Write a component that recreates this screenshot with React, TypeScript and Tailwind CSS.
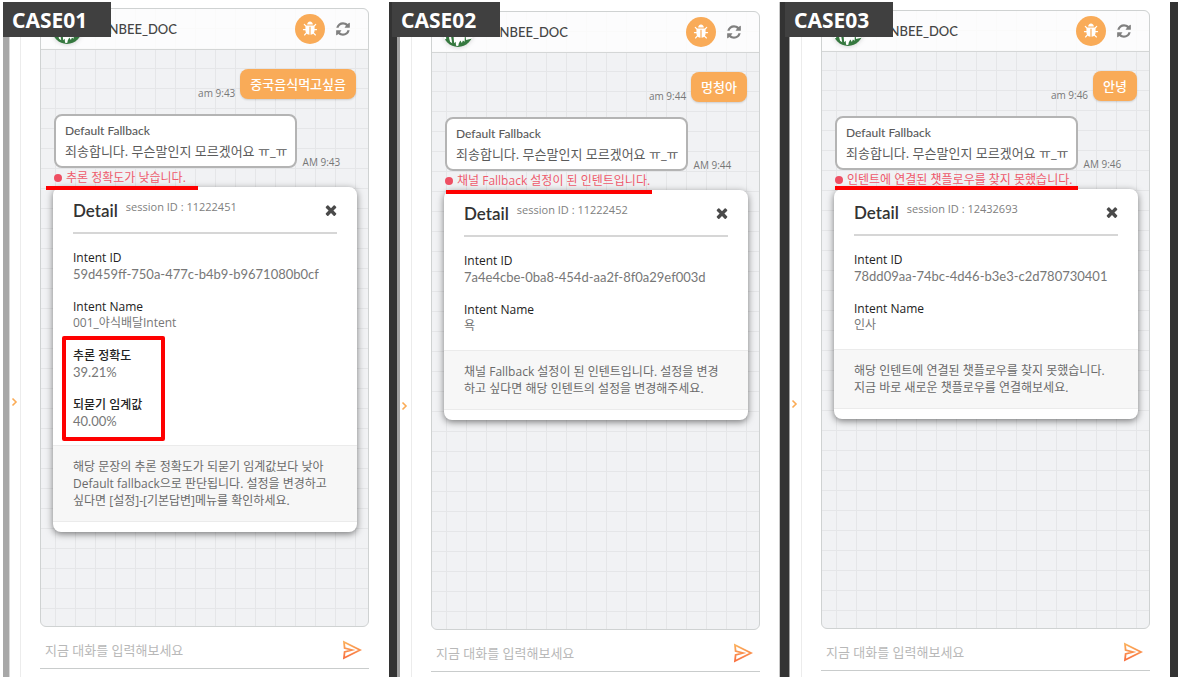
import React from "react";

const BUG =
  "M1696 960q0 26-19 45t-45 19h-224q0 171-67 290l208 209q19 19 19 45t-19 45q-18 19-45 19t-45-19l-198-197q-5 5-15 13t-42 28.5-65 36.5-82 29-97 13v-896h-128v896q-51 0-101.5-13.5t-87-33-66-39-43.5-32.5l-15-14-183 207q-20 21-48 21-24 0-43-16-19-18-20.5-44.5t15.5-46.5l202-227q-58-114-58-274h-224q-26 0-45-19t-19-45 19-45 45-19h224v-294l-173-173q-19-19-19-45t19-45 45-19 45 19l173 173h844l173-173q19-19 45-19t45 19 19 45-19 45l-173 173v294h224q26 0 45 19t19 45zm-480-576h-640q0-133 93.5-226.5t226.5-93.5 226.5 93.5 93.5 226.5z";
const REFRESH =
  "M1639 1056q0 5-1 7-64 268-268 434.5t-478 166.5q-146 0-282.5-55t-243.5-157l-129 129q-19 19-45 19t-45-19-19-45v-448q0-26 19-45t45-19h448q26 0 45 19t19 45-19 45l-137 137q71 66 161 102t187 36q134 0 250-65t186-179q11-17 53-117 8-23 30-23h192q13 0 22.5 9.5t9.5 22.5zm25-800v448q0 26-19 45t-45 19h-448q-26 0-45-19t-19-45 19-45l138-138q-148-137-349-137-134 0-250 65t-186 179q-11 17-53 117-8 23-30 23h-199q-13 0-22.5-9.5t-9.5-22.5v-7q65-268 270-434.5t480-166.5q146 0 284 55.5t245 156.5l130-129q19-19 45-19t45 19 19 45z";
const TIMES =
  "M1490 1322q0 40-28 68l-136 136q-28 28-68 28t-68-28l-294-294-294 294q-28 28-68 28t-68-28l-136-136q-28-28-28-68t28-68l294-294-294-294q-28-28-28-68t28-68l136-136q28-28 68-28t68 28l294 294 294-294q28-28 68-28t68 28l136 136q28 28 28 68t-28 68l-294 294 294 294q28 28 28 68z";

function Glyph({ path, className }: { path: string; className: string }) {
  return (
    <svg viewBox="0 0 1792 1792" fill="currentColor" className={className} aria-hidden="true">
      <path d={path} />
    </svg>
  );
}

function Avatar() {
  return (
    <svg viewBox="0 0 28 28" className="size-[30px] shrink-0 drop-shadow-sm" aria-hidden="true">
      <circle cx="14" cy="14" r="14" fill="#35783f" />
      <path
        d="M5.500 19 L7.600 18.500 L8.600 24.500 L6.600 23 Z M9.500 14 L20.500 14 L20.200 23.200 L18.600 22 L17.600 24.200 L16.200 22 L14.800 24.500 L14.200 27 L12.200 26.800 L11.800 23 L10.400 24.500 Z"
        fill="#fff"
      />
      <path d="M0 14 L2.500 14 L3 20.500 L1.200 21 Z M21 17 L28 15.500 L27.400 20 L21.500 21.500 Z" fill="#fff" />
    </svg>
  );
}

function SendIcon({ id }: { id: string }) {
  return (
    <svg viewBox="0 0 20 20" fill="none" className="size-5" aria-hidden="true">
      <defs>
        <linearGradient id={id} x1="0" y1="0" x2="0" y2="1">
          <stop offset="0" stopColor="#fbb05c" />
          <stop offset="1" stopColor="#f9703f" />
        </linearGradient>
      </defs>
      <path
        d="M2 2 L18 10 L2 18 L2.600 12 L10 10 L2.600 8 Z"
        stroke={`url(#${id})`}
        strokeWidth="1.800"
      />
    </svg>
  );
}

type Field = { label: string; value: string };

type Case = {
  tag: string;
  tagClass: string;
  edge: React.ReactNode;
  railClass: string;
  bodyClass: string;
  underline: string;
  message: string;
  time: string;
  status: string;
  session: string;
  fields: Field[];
  marked?: Field[];
  note: string[];
};

const cases: Case[] = [
  {
    tag: "CASE01",
    tagClass: "left-[3px]",
    edge: (
      <>
        <div className="ml-[3px] w-[6px] bg-[#a8a8a8]" />
        <div className="w-px bg-[#d9d9d9]" />
      </>
    ),
    railClass: "w-[11px] pt-[6px]",
    bodyClass: "pt-[6px] pb-2 pl-[19px] pr-5",
    underline: "left-[5px] top-[177px] w-[152px]",
    message: "중국음식먹고싶음",
    time: "9:43",
    status: "추론 정확도가 낮습니다.",
    session: "11222451",
    fields: [
      { label: "Intent ID", value: "59d459ff-750a-477c-b4b9-b9671080b0cf" },
      { label: "Intent Name", value: "001_야식배달Intent" },
    ],
    marked: [
      { label: "추론 정확도", value: "39.21%" },
      { label: "되묻기 임계값", value: "40.00%" },
    ],
    note: [
      "해당 문장의 추론 정확도가 되묻기 임계값보다 낮아",
      "Default fallback으로 판단됩니다. 설정을 변경하고",
      "싶다면 [설정]-[기본답변]메뉴를 확인하세요.",
    ],
  },
  {
    tag: "CASE02",
    tagClass: "left-[3px]",
    edge: (
      <>
        <div className="w-2 bg-[#333333]" />
        <div className="w-[3px] bg-[#a0a0a0]" />
      </>
    ),
    railClass: "w-[12px] pt-[10px]",
    bodyClass: "border-r border-[#c8c8c8] pt-[9px] pb-[5px] pl-[19px] pr-[19px]",
    underline: "left-[14px] top-[178px] w-[206px]",
    message: "멍청아",
    time: "9:44",
    status: "채널 Fallback 설정이 된 인텐트입니다.",
    session: "11222452",
    fields: [
      { label: "Intent ID", value: "7a4e4cbe-0ba8-454d-aa2f-8f0a29ef003d" },
      { label: "Intent Name", value: "욕" },
    ],
    note: [
      "채널 Fallback 설정이 된 인텐트입니다. 설정을 변경",
      "하고 싶다면 해당 인텐트의 설정을 변경해주세요.",
    ],
  },
  {
    tag: "CASE03",
    tagClass: "left-[5px]",
    edge: (
      <>
        <div className="w-[9px] bg-[#333333]" />
        <div className="w-px bg-[#a0a0a0]" />
      </>
    ),
    railClass: "w-[12px] pt-[8px]",
    bodyClass: "pt-[8px] pb-[6px] pl-[19px] pr-5",
    underline: "left-[13px] top-[175px] w-[243px]",
    message: "안녕",
    time: "9:46",
    status: "인텐트에 연결된 챗플로우를 찾지 못했습니다.",
    session: "12432693",
    fields: [
      { label: "Intent ID", value: "78dd09aa-74bc-4d46-b3e3-c2d780730401" },
      { label: "Intent Name", value: "인사" },
    ],
    note: [
      "해당 인텐트에 연결된 챗플로우를 찾지 못했습니다.",
      "지금 바로 새로운 챗플로우를 연결해보세요.",
    ],
  },
];

const isNumeric = (value: string) => /^[\w.%-]+$/.test(value);

function FieldList({ fields }: { fields: Field[] }) {
  return (
    <dl className="flex flex-col gap-[17px] text-xs leading-4">
      {fields.map((f) => (
        <div key={f.label}>
          <dt className="font-medium text-[#222222]">{f.label}</dt>
          <dd
            className={
              isNumeric(f.value)
                ? "font-['Lato',sans-serif] text-[13px] leading-4 text-[#777777]"
                : "text-[#777777]"
            }
          >
            {f.value}
          </dd>
        </div>
      ))}
    </dl>
  );
}

function DetailCard({ item }: { item: Case }) {
  return (
    <div className="mr-[11px] ml-3 rounded-lg bg-white pb-[10px] shadow-[0_2px_7px_rgba(0,0,0,0.5)]">
      <div className="mx-5 flex h-[47px] items-center border-b-2 border-[#d6d6d6] pt-[3px]">
        <h2 className="font-['Lato',sans-serif] text-[17px] leading-6 font-semibold text-[#333333]">Detail</h2>
        <span className="mb-2 ml-2 text-[11px] leading-4 text-[#808080]">
          session ID : {item.session}
        </span>
        <button type="button" aria-label="Close" className="-mr-[2px] mb-[3px] ml-auto text-[#4a4a4a]">
          <Glyph path={TIMES} className="size-4" />
        </button>
      </div>
      <div className="flex flex-col gap-[17px] px-5 py-4">
        <FieldList fields={item.fields} />
        {item.marked && (
          <div className="relative">
            <FieldList fields={item.marked} />
            <div className="absolute -top-[12px] -bottom-[12px] -left-[11px] w-[103px] rounded-xs border-4 border-[#fe0000]" />
          </div>
        )}
      </div>
      <p className="border-y border-[#ebebeb] bg-[#f7f7f7] px-5 py-3 text-xs leading-[17px] whitespace-nowrap text-[#6a6a6a]">
        {item.note.map((line) => (
          <span key={line} className="block">
            {line}
          </span>
        ))}
      </p>
    </div>
  );
}

function CasePanel({ item }: { item: Case }) {
  return (
    <section className="relative flex">
      {item.edge}
      <div className={`${item.railClass} shrink-0 border-r border-[#ececec]`}>
        <button type="button" aria-label="Expand" className="mt-[389px] block">
          <svg viewBox="0 0 8 10" fill="none" className="h-[10px] w-2" aria-hidden="true">
            <path d="M2.500 1.500 L6 5 L2.500 8.500" stroke="#fbab55" strokeWidth="1.600" />
          </svg>
        </button>
      </div>
      <div className={`${item.bodyClass} flex min-w-0 flex-1 flex-col`}>
        <div className="relative flex-1 rounded-md border border-[#cfd2d2] bg-[#f1f2f4] bg-[linear-gradient(to_right,#e5e6e8_1px,transparent_1px),linear-gradient(to_bottom,#e5e6e8_1px,transparent_1px)] bg-size-[20px_20px] bg-position-[14px_19px]">
          <header className="flex h-[41px] items-center rounded-t-md border-b border-[#d4d6d6] bg-white/80 pr-[17px] pl-[11px]">
            <Avatar />
            <h1 className="ml-2 font-['Lato',sans-serif] text-[13px] leading-5 font-medium text-[#444444]">
              DANBEE_DOC
            </h1>
            <button
              type="button"
              aria-label="Debug"
              className="ml-auto flex size-[30px] items-center justify-center rounded-full bg-[#f9ab58] text-white"
            >
              <Glyph path={BUG} className="size-4" />
            </button>
            <button type="button" aria-label="Refresh" className="ml-[10px] text-[#808080]">
              <Glyph path={REFRESH} className="size-4" />
            </button>
          </header>
          <div className="flex items-end justify-end gap-[5px] pt-[19px] pr-3">
            <span className="text-[10px] leading-3 text-[#777777]">am {item.time}</span>
            <p className="rounded-lg bg-[#f9ab58] px-[10px] py-[6px] text-[13px] leading-[18px] font-medium text-white shadow-[0_1px_2px_rgba(0,0,0,0.15)]">
              {item.message}
            </p>
          </div>
          <div className="flex items-end gap-[6px] pt-[15px] pl-[13px]">
            <div className="rounded-lg border-2 border-[#b4b4b4] bg-white py-[5px] pr-[7px] pl-[9px] text-[#5a5a5a]">
              <p className="font-['Lato',sans-serif] text-xs leading-5 font-medium">Default Fallback</p>
              <p className="text-[13px] leading-5 whitespace-nowrap">죄송합니다. 무슨말인지 모르겠어요 ㅠ_ㅠ</p>
            </div>
            <span className="text-[10px] leading-3 text-[#777777]">AM {item.time}</span>
          </div>
          <p className="flex items-center gap-1 pl-[13px] text-xs leading-[19px] whitespace-nowrap text-[#ee5a6c]">
            <span className="size-2 rounded-full bg-[#ee4f63]" />
            {item.status}
          </p>
          <DetailCard item={item} />
          <div className={`${item.underline} absolute h-1 bg-[#fe0000]`} />
        </div>
        <form
          className="flex h-[42px] items-center border-b border-[#c9cccc] pt-1 pr-[7px] pl-[5px]"
          onSubmit={(e) => e.preventDefault()}
        >
          <input
            type="text"
            aria-label="지금 대화를 입력해보세요"
            placeholder="지금 대화를 입력해보세요"
            className="min-w-0 flex-1 bg-transparent text-[13px] leading-5 text-[#555555] outline-none placeholder:text-[#b8b8b8]"
          />
          <button type="submit" aria-label="Send">
            <SendIcon id={`send-${item.tag}`} />
          </button>
        </form>
      </div>
      <div
        className={`${item.tagClass} absolute top-0 flex h-[35px] w-[108px] items-center bg-[#404040] pl-[9px] font-['Noto_Sans',sans-serif] text-[21px] leading-6 font-bold text-white`}
      >
        {item.tag}
      </div>
    </section>
  );
}

export default function App() {
  return (
    <main className="grid min-h-screen grid-cols-[389fr_391fr_390fr_8px] bg-white pt-[2px] font-['Open_Sans','Noto_Sans_CJK_KR',sans-serif]">
      {cases.map((item) => (
        <CasePanel key={item.tag} item={item} />
      ))}
      <div className="bg-[#333333]" />
    </main>
  );
}
